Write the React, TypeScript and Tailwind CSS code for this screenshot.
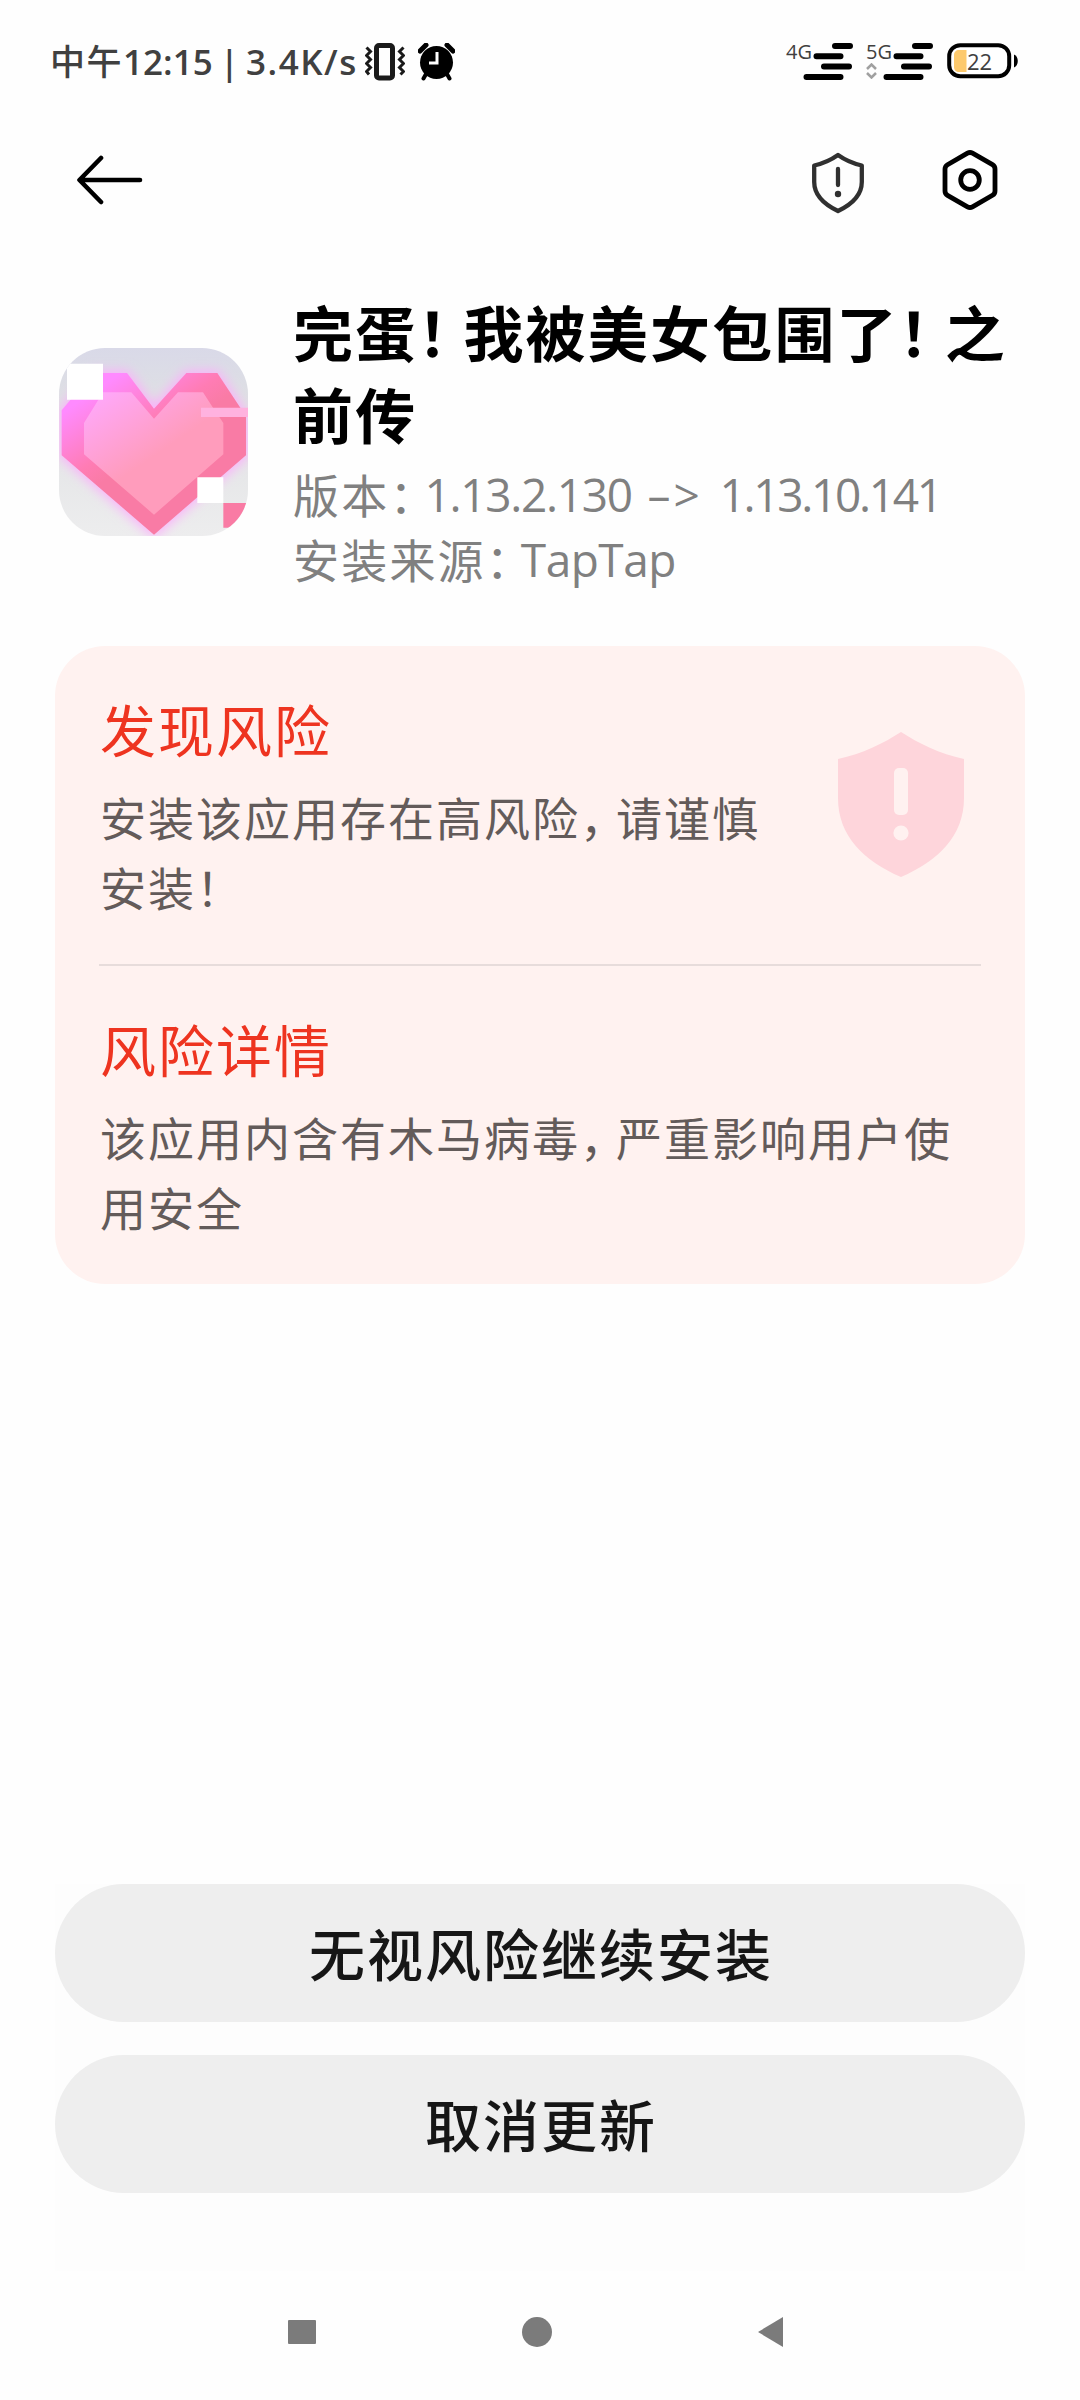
const risks = [
  {
    title: '发现风险',
    lines: [['安装该应用存在高风险', '，', '请谨慎'], ['安装', '！', '']],
    badge: true,
  },
  {
    title: '风险详情',
    lines: [['该应用内含有木马病毒', '，', '严重影响用户使'], ['用安全', '', '']],
    badge: false,
  },
]

const actions = ['无视风险继续安装', '取消更新']

function SignalBars() {
  return (
    <svg width="52" height="40" viewBox="0 0 52 40" className="shrink-0" stroke="#000" strokeWidth="6" strokeLinecap="round">
      <path d="M33 6h15M14.500 16.300h24M22 26.500h25M4.500 37h34" />
    </svg>
  )
}

function StatusBar() {
  return (
    <div className="flex h-[100px] shrink-0 items-start pl-[50px] text-[#404040]">
      <div className="mt-[34px] flex w-[315px] items-baseline whitespace-nowrap text-[35px] leading-[52px] font-medium">
        <span className="tracking-[1.500px]">中午</span>
        <span className="font-['Open_Sans','Noto_Sans_CJK_SC',sans-serif] font-semibold [word-spacing:-2px]">
          12:15 | <span className="tracking-[1.500px]">3.4K/s</span>
        </span>
      </div>
      <svg width="40" height="38" viewBox="0 0 40 38" className="mt-[43px] shrink-0" fill="none" stroke="#1a1a1a">
        <rect x="11.500" y="2.500" width="16" height="32.500" rx="2.500" strokeWidth="5" />
        <path d="M1.500 4.500l4 4-4 4 4 4-4 4 4 4-4 4 2.500 3M38.500 4.500l-4 4 4 4-4 4 4 4-4 4 4 4-3 3" strokeWidth="3" />
      </svg>
      <svg width="37" height="38" viewBox="0 0 37 38" className="mt-[43px] ml-[13px] shrink-0">
        <circle cx="18.500" cy="19.500" r="16.500" />
        <path d="M2 8L8 2M35 8l-6-6" stroke="#000" strokeWidth="5" strokeLinecap="round" />
        <path d="M8 31l-2.500 4.500M29 31l2.500 4.500" stroke="#000" strokeWidth="4" strokeLinecap="round" />
        <path d="M19 9v11h-8" fill="none" stroke="#fff" strokeWidth="3" />
      </svg>

      <div className="mt-[40px] ml-[331px] flex w-[80px]">
        <span className="w-[16px] font-['Open_Sans',sans-serif] text-[20px] leading-[24px] font-medium">4G</span>
        <SignalBars />
      </div>
      <div className="mt-[40px] flex w-[81px]">
        <div className="w-[16px]">
          <span className="block font-['Open_Sans',sans-serif] text-[20px] leading-[24px] font-medium">5G</span>
          <svg width="11" height="16" viewBox="0 0 11 16" className="-mt-px" fill="none" stroke="#a0a0a0" strokeWidth="2.500">
            <path d="M1 6l4.500-4.500L10 6M1 10l4.500 4.500L10 10" />
          </svg>
        </div>
        <SignalBars />
      </div>
      <svg width="72" height="36" viewBox="0 0 72 36" className="mt-[43px] shrink-0">
        <rect x="2.200" y="2.200" width="60" height="31" rx="11" fill="#fff" stroke="#000" strokeWidth="4" />
        <path d="M67 11.500c5 2 5 11 0 13z" />
        <path d="M12 7h7.500v22H12c-3 0-5-2-5-5V12c0-3 2-5 5-5z" fill="#fdc96c" />
        <text x="20" y="26.500" fontSize="22" fill="#404040" className="font-['Open_Sans',sans-serif]">
          22
        </text>
      </svg>
    </div>
  )
}

function Header() {
  return (
    <header className="flex h-[160px] shrink-0 items-center pr-[81px] pl-[76px]">
      <svg width="68" height="50" viewBox="0 0 68 50" fill="none" stroke="#000" strokeWidth="4.600" strokeLinecap="round" strokeLinejoin="round">
        <path d="M25 3L3.500 25 25 47M4 25h60" />
      </svg>
      <svg width="56" height="62" viewBox="0 0 56 62" className="mt-[5px] ml-auto" fill="none" stroke="#303030" strokeWidth="4.300" strokeLinejoin="round">
        <path d="M28 3C21 8 13 11.500 4.200 13.500V30c0 12 7 21 23.800 29 16.800-8 23.800-17 23.800-29V13.500C43 11.500 35 8 28 3z" />
        <path d="M28 17v16" strokeLinecap="round" />
        <circle cx="28" cy="42" r="3.200" fill="#303030" stroke="none" />
      </svg>
      <svg width="58" height="62" viewBox="0 0 58 62" className="ml-[75px]" fill="none" stroke="#000" strokeWidth="4.800" strokeLinejoin="round">
        <path d="M26.500 4.200Q29 2.800 31.500 4.200L51.500 15.700Q54 17.200 54 20V42Q54 44.800 51.500 46.300L31.500 57.800Q29 59.200 26.500 57.800L6.500 46.300Q4 44.800 4 42V20Q4 17.200 6.500 15.700z" />
        <circle cx="29" cy="31" r="9.300" />
      </svg>
    </header>
  )
}

function AppIcon() {
  return (
    <svg width="189" height="188" viewBox="58 53 567 564" className="mt-[58px] shrink-0 rounded-[46px]">
      <defs>
        <linearGradient id="outer" gradientUnits="userSpaceOnUse" x1="120" y1="180" x2="270" y2="400">
          <stop offset="0.100" stopColor="#ff8aff" />
          <stop offset="0.750" stopColor="#ff7cb4" />
          <stop offset="1" stopColor="#f97ba5" />
        </linearGradient>
        <linearGradient id="inner" gradientUnits="userSpaceOnUse" x1="160" y1="180" x2="310" y2="400">
          <stop offset="0" stopColor="#ffa9ff" />
          <stop offset="1" stopColor="#ff9cbc" />
        </linearGradient>
        <linearGradient id="back" x1="0" y1="0" x2="0" y2="1">
          <stop offset="0" stopColor="#d9d9e8" />
          <stop offset="0.300" stopColor="#dfe1e3" />
          <stop offset="1" stopColor="#ededee" />
        </linearGradient>
        <filter id="glow" x="-20%" y="-20%" width="140%" height="140%">
          <feGaussianBlur stdDeviation="18" />
        </filter>
      </defs>
      <rect x="58" y="53" width="567" height="564" fill="url(#back)" />
      <path
        d="M160 128H262L343 235 440 128H533L619 258V375L343 613 66 375V240z"
        fill="#fbb0fb"
        stroke="#fbb0fb"
        strokeWidth="14"
        filter="url(#glow)"
      />
      <path d="M160 128H262L343 235 440 128H533L602 232 619 258V375L343 613 66 375V240z" fill="url(#outer)" />
      <path d="M190 186H275L343 265 415 186H490L520 232 551 278V372L343 553 133 372V278z" fill="url(#inner)" />
      <path d="M484 232H625V260H484z" fill="#ffb2df" />
      <path d="M551 518H621V592H551z" fill="#f97ba4" />
      <path d="M82 100H190V208H82zM473 441H551V518H473z" fill="#fff" />
    </svg>
  )
}

function AppInfo() {
  return (
    <section className="flex h-[386px] shrink-0 gap-[45px] pt-[30px] pl-[59px]">
      <AppIcon />
      <div className="whitespace-nowrap">
        <h1 className="text-[60px] leading-[82px] font-bold tracking-[2.200px] text-black">
          完蛋<span className="tracking-[-14px]">！</span>我被美女包围了<span className="tracking-[-14px]">！</span>之
          <br />
          前传
        </h1>
        <div className="mt-[7px] text-[46px] leading-[65px] tracking-[2.200px] text-[#808080]">
          <p className="flex h-[65px]">
            版本<span className="tracking-[-11px]">：</span>
            <span className="w-[223px] pt-px font-['Open_Sans',sans-serif] tracking-[-1.300px]">1.13.2.130</span>
            <span className="w-[72px] pt-px font-['Open_Sans',sans-serif] tracking-[3px]">–&gt;</span>
            <span className="pt-px font-['Open_Sans',sans-serif] tracking-[-2.300px]">1.13.10.141</span>
          </p>
          <p className="flex h-[65px]">
            安装来源<span className="tracking-[-11px]">：</span>
            <span className="pt-px font-['Open_Sans',sans-serif] tracking-[-0.500px]">TapTap</span>
          </p>
        </div>
      </div>
    </section>
  )
}

function RiskShield() {
  return (
    <svg width="126" height="145" viewBox="0 0 126 145" className="mt-[44px] mr-[17px] shrink-0">
      <path d="M63 0C80 11 102 22 126 27V66C126 104 100 129 63 145 26 129 0 104 0 66V27C24 22 46 11 63 0z" fill="#fed5db" />
      <rect x="56" y="36" width="14" height="47" rx="5" fill="#fff1f0" />
      <circle cx="63" cy="101" r="7.600" fill="#fff1f0" />
    </svg>
  )
}

function RiskCard() {
  return (
    <section className="mx-[55px] shrink-0 divide-y-2 divide-[#e7dcdb] rounded-[50px] bg-[#fff2f0] px-[44px] whitespace-nowrap">
      {risks.map((r) => (
        <div key={r.title} className="flex justify-between pt-[42px] pb-[43px]">
          <div className="pl-px">
            <h2 className="text-[56px] leading-[80px] tracking-[2px] text-[#ee3420]">{r.title}</h2>
            <div className="mt-[13px] text-[46px] leading-[70px] tracking-[2px] text-[#635b5a]">
              {r.lines.map(([before, mark, after]) => (
                <p key={before}>
                  {before}
                  <span className="tracking-[-10px]">{mark}</span>
                  {after}
                </p>
              ))}
            </div>
          </div>
          {r.badge && <RiskShield />}
        </div>
      ))}
    </section>
  )
}

function NavBar() {
  return (
    <nav className="flex h-[129px] shrink-0 pt-[45px] pl-[288px]">
      <svg width="496" height="32" viewBox="0 0 496 32" fill="#7b7b7b">
        <rect x="0" y="4" width="28" height="24" rx="1" />
        <circle cx="249" cy="16" r="15" />
        <path d="M495 1v30L470 16z" />
      </svg>
    </nav>
  )
}

export default function App() {
  return (
    <main className="flex h-[2400px] w-[1080px] flex-col overflow-hidden bg-[#fefefe] font-['Noto_Sans_CJK_SC',sans-serif]">
      <StatusBar />
      <Header />
      <AppInfo />
      <RiskCard />
      <div className="mx-[55px] mt-auto flex h-[387px] shrink-0 flex-col gap-[33px] bg-[#fdfdfd]">
        {actions.map((label) => (
          <button
            key={label}
            type="button"
            className="h-[138px] rounded-full bg-[#eeeeee] pb-[2px] pl-[2px] text-[56px] leading-[136px] font-medium tracking-[2px] text-[#161616]"
          >
            {label}
          </button>
        ))}
      </div>
      <NavBar />
    </main>
  )
}
